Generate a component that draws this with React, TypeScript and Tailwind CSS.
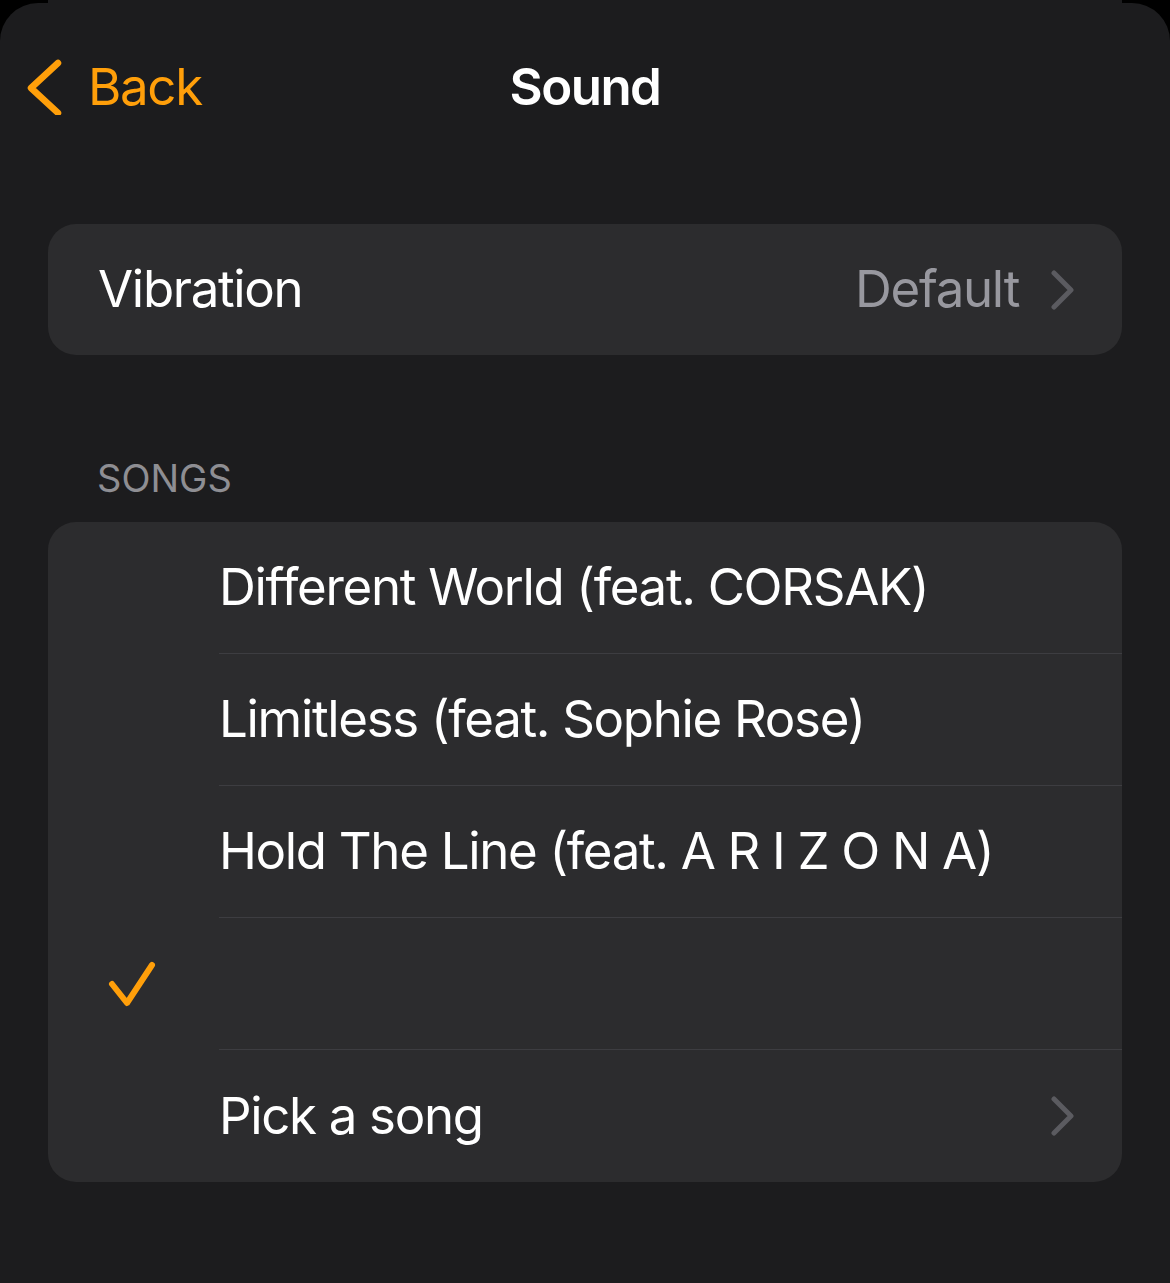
const font = { fontFamily: "Inter, 'Noto Sans', sans-serif" };

const Chevron = () => (
  <svg width="24" height="40" viewBox="0 0 24 40" className="shrink-0">
    <polyline
      points="3,3 20,20 3,37"
      fill="none"
      stroke="#5b5b60"
      strokeWidth="5"
      strokeLinecap="round"
      strokeLinejoin="round"
    />
  </svg>
);

const songs = [
  "Different World (feat. CORSAK)",
  "Limitless (feat. Sophie Rose)",
  "Hold The Line (feat. A R I Z O N A)",
];

export default function App() {
  return (
    <div className="w-[1170px] h-[1283px] bg-black overflow-hidden" style={font}>
      <div className="h-[3px] mx-[48px] bg-[#1c1c1e]" />
      <div className="h-[1280px] bg-[#1c1c1e] rounded-t-[38px]">
        {/* nav bar */}
        <div className="relative h-[168px] flex items-center justify-center">
          <div className="absolute left-[26px] top-0 h-full flex items-center gap-[24px]">
            <svg width="38" height="56" viewBox="0 0 38 56">
              <polyline
                points="32,4 5,29 32,54"
                fill="none"
                stroke="#ff9f0a"
                strokeWidth="6.5"
                strokeLinecap="round"
                strokeLinejoin="round"
              />
            </svg>
            <span className="text-[51px] tracking-[-0.026em] text-[#ff9f0a]">Back</span>
          </div>
          <span className="text-[51px] tracking-[-0.03em] font-semibold text-white">Sound</span>
        </div>

        {/* vibration */}
        <div className="mt-[53px] mx-[48px] h-[131px] rounded-[28px] bg-[#2c2c2e] flex items-center pl-[50px] pr-[47px]">
          <span className="text-[51px] tracking-[-0.026em] text-white flex-1">Vibration</span>
          <span className="text-[51px] tracking-[-0.026em] text-[#98989f] mr-[32px]">Default</span>
          <Chevron />
        </div>

        {/* songs header */}
        <div className="mt-[104px] pl-[97px] text-[38px] leading-none text-[#8e8e93]">SONGS</div>

        <div className="mt-[25px] mx-[48px] rounded-[28px] bg-[#2c2c2e] overflow-hidden">
          {songs.map((s) => (
            <div key={s} className="flex h-[132px]">
              <div className="w-[171px] shrink-0" />
              <div className="flex-1 flex items-center border-b border-[#3d3d41] pb-[1px]">
                <span className="text-[51px] tracking-[-0.026em] text-white">{s}</span>
              </div>
            </div>
          ))}
          <div className="flex h-[132px]">
            <div className="w-[171px] shrink-0 flex items-center pl-[60px]">
              <svg width="50" height="48" viewBox="0 0 50 48">
                <polyline
                  points="4,24 19,43 44,5"
                  fill="none"
                  stroke="#ff9f0a"
                  strokeWidth="6"
                  strokeLinecap="round"
                  strokeLinejoin="round"
                />
              </svg>
            </div>
            <div className="flex-1 border-b border-[#3d3d41]" />
          </div>
          <div className="flex h-[132px]">
            <div className="w-[171px] shrink-0" />
            <div className="flex-1 flex items-center pr-[47px]">
              <span className="text-[51px] tracking-[-0.026em] text-white flex-1">Pick a song</span>
              <Chevron />
            </div>
          </div>
        </div>
      </div>
    </div>
  );
}
